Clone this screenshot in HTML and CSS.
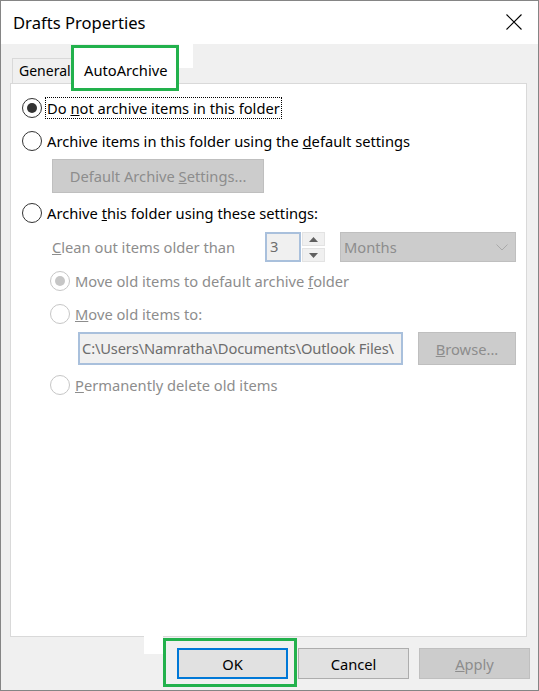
FILE: index.html
```html
<!DOCTYPE html>
<html lang="en">
<head>
  <meta charset="UTF-8" />
  <title>Drafts Properties</title>
  <link rel="stylesheet" href="styles.css">
</head>
<body>
  <div class="window">
    <div class="titlebar">
      <span class="title">Drafts Properties</span>
      <svg class="close" width="16" height="16" viewBox="0 0 16 16">
        <path d="M0.5 0.5L15.5 15.5M15.5 0.5L0.5 15.5" stroke="#000" stroke-width="1.1" fill="none"/>
      </svg>
    </div>

    <div class="content">
      <div class="tabs">
        <div class="tab">General</div>
        <div class="tab active">AutoArchive</div>
      </div>

      <div class="panel">
        <div class="option row-1">
          <span class="radio checked"></span>
          <span class="focus">Do <u>n</u>ot archive items in this folder</span>
        </div>

        <div class="option row-2">
          <span class="radio"></span>
          <span>Archive items in this folder using the <u>d</u>efault settings</span>
        </div>

        <button class="btn disabled settings-btn">Default Archive <u>S</u>ettings...</button>

        <div class="option row-3">
          <span class="radio"></span>
          <span>Archive <u>t</u>his folder using these settings:</span>
        </div>

        <div class="clean-row">
          <span class="clean-label"><u>C</u>lean out items older than</span>
          <span class="spin-input">3</span>
          <span class="spin-btns">
            <span class="spin-btn">
              <svg width="9" height="5" viewBox="0 0 9 5"><path d="M0 5L4.5 0L9 5Z" fill="#606060"/></svg>
            </span>
            <span class="spin-btn">
              <svg width="9" height="5" viewBox="0 0 9 5"><path d="M0 0L4.5 5L9 0Z" fill="#606060"/></svg>
            </span>
          </span>
          <span class="select">
            <span>Months</span>
            <svg width="12" height="7" viewBox="0 0 12 7"><path d="M0.5 0.5L6 6L11.5 0.5" stroke="#a9a9a9" fill="none"/></svg>
          </span>
        </div>

        <div class="option sub row-4 off">
          <span class="radio checked"></span>
          <span>Move old items to default archive <u>f</u>older</span>
        </div>

        <div class="option sub row-5 off">
          <span class="radio"></span>
          <span><u>M</u>ove old items to:</span>
        </div>

        <div class="path-row">
          <span class="path-input">C:\Users\Namratha\Documents\Outlook Files\</span>
          <button class="btn disabled browse-btn"><u>B</u>rowse...</button>
        </div>

        <div class="option sub row-6 off">
          <span class="radio"></span>
          <span><u>P</u>ermanently delete old items</span>
        </div>
      </div>

      <div class="footer">
        <span class="marked">
          <button class="btn default">OK</button>
        </span>
        <button class="btn">Cancel</button>
        <button class="btn disabled"><u>A</u>pply</button>
      </div>
    </div>
  </div>
</body>
</html>
```

FILE: styles.css
```css
body {
  margin: 0;
  font-family: "Noto Sans", "Open Sans", sans-serif;
  font-size: 14.7px;
  color: #000;
}

.window {
  width: 539px;
  height: 691px;
  box-sizing: border-box;
  border: 1px solid #858585;
  background: #f0f0f0;
  display: flex;
  flex-direction: column;
}

.titlebar {
  height: 43px;
  background: #fff;
  display: flex;
  align-items: center;
  justify-content: space-between;
  padding: 0 16px 0 12px;
  flex-shrink: 0;
}

.title {
  font-size: 16.6px;
  margin-top: -1px;
}

.close {
  margin-top: -2px;
}

.content {
  flex: 1;
  display: flex;
  flex-direction: column;
}

/* Tabs */
.tabs {
  height: 39px;
  display: flex;
  align-items: flex-end;
  padding-left: 11px;
}

.tab {
  box-sizing: border-box;
  height: 25px;
  width: 62px;
  border: 1px solid #d9d9d9;
  border-bottom: none;
  padding-left: 6px;
  font-size: 14px;
  line-height: 24px;
  white-space: nowrap;
}

.tab.active {
  width: 108px;
  height: 46px;
  margin: 0 0 -8px -3px;
  border: 3px solid #22b14c;
  background: #fff;
  padding: 0 0 0 10px;
  font-size: 14.7px;
  line-height: 44px;
  position: relative;
  z-index: 1;
}

/* white patch left in the screenshot next to the marked tab */
.tab.active::after {
  content: "";
  position: absolute;
  left: calc(100% + 3px);
  top: -4px;
  width: 14px;
  height: 24px;
  background: #fff;
}

/* Panel */
.panel {
  box-sizing: border-box;
  width: 517px;
  height: 554px;
  margin-left: 9px;
  background: #fff;
  border: 1px solid #d9d9d9;
  padding: 13px 0 0 11px;
}

.option {
  height: 22px;
  display: flex;
  align-items: center;
  white-space: nowrap;
}

.option .radio {
  margin-right: 5px;
}

.row-2 { margin-top: 11px; }
.row-3 { margin-top: 9px; }
.row-4 { margin-top: 8px; }
.row-5 { margin-top: 11px; }
.row-6 { margin-top: 9px; }

.option.sub {
  margin-left: 28px;
}

.option.off {
  color: #8d8d8d;
}

.radio {
  box-sizing: border-box;
  width: 20px;
  height: 20px;
  border: 1px solid #333;
  border-radius: 50%;
  background: #fff;
  display: inline-flex;
  align-items: center;
  justify-content: center;
  flex-shrink: 0;
}

.radio.checked::after {
  content: "";
  width: 10px;
  height: 10px;
  border-radius: 50%;
  background: #333;
}

.off .radio {
  border-color: #c6c6c6;
}

.off .radio.checked::after {
  background: #c6c6c6;
}

.focus {
  outline: 1px dotted #000;
  line-height: 20px;
  padding: 0 1px;
  margin-left: -1px;
}

/* Buttons */
.btn {
  box-sizing: border-box;
  font-family: inherit;
  font-size: 14.7px;
  color: #000;
  background: #e1e1e1;
  border: 1px solid #adadad;
  height: 31px;
  width: 111px;
  padding: 0;
}

.btn.disabled {
  background: #cccccc;
  border-color: #bfbfbf;
  color: #8d8d8d;
}

.btn.default {
  border: 2px solid #0078d7;
}

.settings-btn {
  display: block;
  width: 212px;
  height: 34px;
  margin: 7px 0 0 30px;
}

/* Clean out row */
.clean-row {
  display: flex;
  align-items: center;
  height: 30px;
  margin: 8px 0 0 30px;
  color: #8d8d8d;
  white-space: nowrap;
}

.clean-label {
  width: 213px;
}

.spin-input {
  box-sizing: border-box;
  width: 36px;
  height: 30px;
  background: #f0f0f0;
  border: 2px solid #a9c0dc;
  padding-left: 3px;
  line-height: 24px;
  color: #6d6d6d;
}

.spin-btns {
  display: flex;
  flex-direction: column;
  gap: 2px;
  margin-left: 1px;
}

.spin-btn {
  box-sizing: border-box;
  width: 23px;
  height: 14px;
  background: #f0f0f0;
  border: 1px solid #e3e3e3;
  display: flex;
  align-items: center;
  justify-content: center;
}

.select {
  box-sizing: border-box;
  width: 176px;
  height: 30px;
  margin-left: 15px;
  background: #cccccc;
  border: 1px solid #bfbfbf;
  display: flex;
  align-items: center;
  justify-content: space-between;
  padding: 0 7px 0 3px;
}

/* Path row */
.path-row {
  display: flex;
  align-items: center;
  margin: 7px 0 0 56px;
}

.path-input {
  box-sizing: border-box;
  width: 325px;
  height: 33px;
  background: #f0f0f0;
  border: 2px solid #a9c0dc;
  padding-left: 2px;
  line-height: 29px;
  color: #6d6d6d;
  white-space: nowrap;
  overflow: hidden;
  letter-spacing: -0.15px;
}

.browse-btn {
  width: 98px;
  height: 33px;
  margin-left: 15px;
}

/* Footer */
.footer {
  display: flex;
  justify-content: flex-end;
  gap: 10px;
  margin-top: 11px;
  padding-right: 8px;
}

.marked {
  position: relative;
}

.marked .btn {
  display: block;
}

/* green highlight drawn over the screenshot */
.marked::after {
  content: "";
  position: absolute;
  top: -10px;
  left: -14px;
  right: -9px;
  bottom: -8px;
  border: 3px solid #22b14c;
}

/* white patch left in the screenshot beside the marked button */
.marked::before {
  content: "";
  position: absolute;
  top: -12px;
  left: -33px;
  width: 19px;
  height: 18px;
  background: #fff;
}
```
